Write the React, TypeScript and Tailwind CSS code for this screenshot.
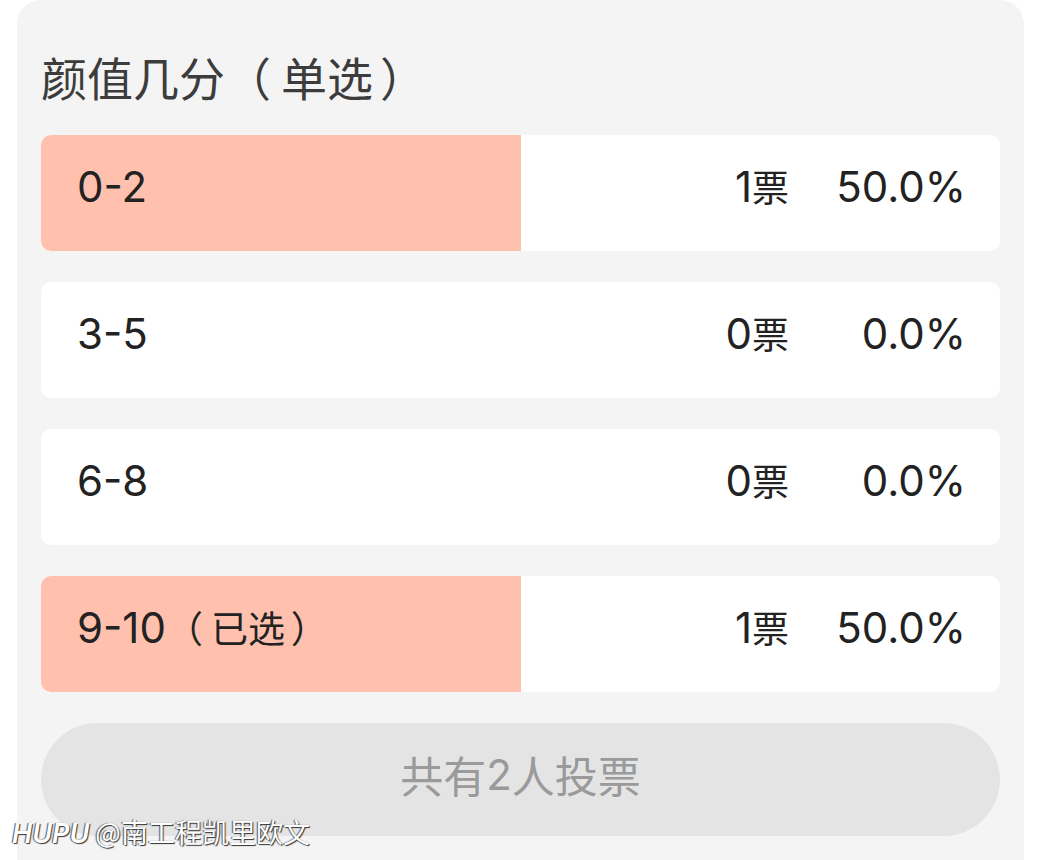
import React from "react";

const rows = [
  { label: "0-2", votes: "1票", pct: "50.0%", fill: 50 },
  { label: "3-5", votes: "0票", pct: "0.0%", fill: 0 },
  { label: "6-8", votes: "0票", pct: "0.0%", fill: 0 },
  { label: "9-10（已选）", votes: "1票", pct: "50.0%", fill: 50 },
];

const cjkFont = { fontFamily: '"Noto Sans CJK SC", sans-serif' };
const latinFont = { fontFamily: 'Inter, "Noto Sans CJK SC", sans-serif' };

function Mixed({ text, latinClass, cjkClass }: { text: string; latinClass: string; cjkClass: string }) {
  const parts = text.split(/([\u3000-\u9fff\uff00-\uffef]+)/).filter((p) => p.length > 0);
  return (
    <>
      {parts.map((p, i) => {
        const isCjk = /[\u3000-\u9fff\uff00-\uffef]/.test(p);
        if (!isCjk) {
          return (
            <span key={i} className={latinClass} style={latinFont}>
              {p}
            </span>
          );
        }
        return (
          <span key={i} className={cjkClass} style={cjkFont}>
            {Array.from(p).map((ch, j) =>
              ch === "（" ? (
                <span key={j} className="mr-[0.22em]">
                  {ch}
                </span>
              ) : ch === "）" ? (
                <span key={j} className="ml-[0.15em]">
                  {ch}
                </span>
              ) : (
                <React.Fragment key={j}>{ch}</React.Fragment>
              )
            )}
          </span>
        );
      })}
    </>
  );
}

export default function App() {
  return (
    <div className="relative h-[860px] w-[1039px] overflow-hidden bg-white" style={cjkFont}>
      <div className="ml-[17px] w-[1007px] h-[900px] rounded-t-[24px] bg-[#f4f4f4] px-[24px]">
        <div className="pt-[49px] text-[46px] leading-[54px] text-[#3c3c3c] whitespace-nowrap">
          <Mixed text="颜值几分（单选）" latinClass="" cjkClass="" />
        </div>
        <div className="mt-[32px] flex flex-col gap-[31px]">
          {rows.map((r) => (
            <div key={r.label} className="relative h-[116px] overflow-hidden rounded-[10px] bg-white">
              <div className="absolute left-0 top-0 h-full bg-[#ffc0ae]" style={{ width: `${r.fill}%` }} />
              <div className="relative flex h-full items-center pl-[36px] pr-[34px] pb-[12px] text-[#222] leading-none">
                <span className="flex-1 whitespace-nowrap">
                  <Mixed text={r.label} latinClass="text-[42px]" cjkClass="text-[37px]" />
                </span>
                <span className="mr-[4px] text-right whitespace-nowrap">
                  <Mixed text={r.votes} latinClass="text-[42px]" cjkClass="text-[37px]" />
                </span>
                <span className="w-[173px] text-right whitespace-nowrap">
                  <Mixed text={r.pct} latinClass="text-[42px]" cjkClass="text-[37px]" />
                </span>
              </div>
            </div>
          ))}
        </div>
        <div className="mt-[31px] flex h-[113px] items-center justify-center rounded-full bg-[#e4e4e4] pb-[10px] leading-none text-[#9a9a9a]">
          <Mixed text="共有2人投票" latinClass="text-[42px]" cjkClass="text-[43px]" />
        </div>
      </div>
      <div
        className="absolute left-[12px] top-[812px] text-[27px] leading-[40px] text-white whitespace-nowrap"
        style={{ textShadow: "1px 1px 1px #333, -1px 0 1px #555" }}
      >
        <span className="italic font-semibold" style={latinFont}>HUPU</span> @南工程凯里欧文
      </div>
    </div>
  );
}
